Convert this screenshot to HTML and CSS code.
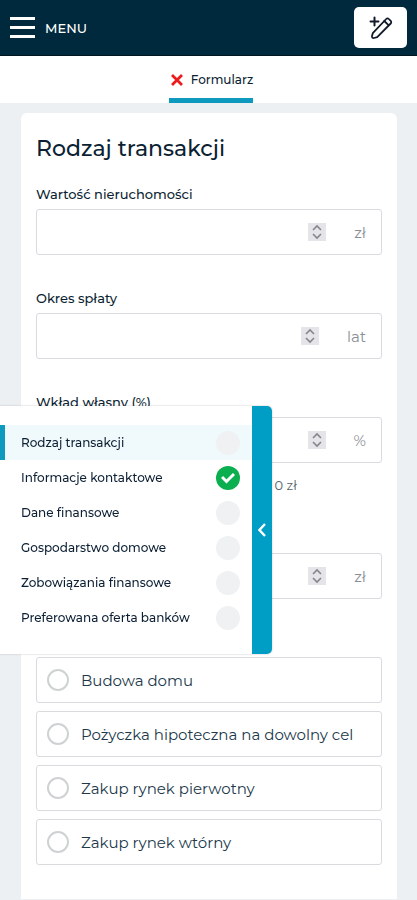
FILE: index.html
```html
<!DOCTYPE html>
<html lang="pl">
<head>
  <meta charset="UTF-8" />
  <meta name="viewport" content="width=device-width, initial-scale=1.0" />
  <title>Formularz</title>
  <link rel="stylesheet" href="styles.css">
</head>
<body>
  <header class="topbar">
    <button type="button" class="menu-button">
      <span class="burger"><i></i><i></i><i></i></span>
      MENU
    </button>
    <button type="button" class="edit-button" aria-label="Nowy wniosek">
      <svg width="24" height="24" viewBox="0 0 24 24" fill="none" stroke="#111a2c" stroke-width="1.8" stroke-linecap="round" stroke-linejoin="round">
        <path d="M5.5 1.5v8M1.5 5.5h8" stroke-width="2" />
        <path d="M3.8 17.2 17.2 3a1.8 1.8 0 0 1 2.6 0l1.9 1.9a1.8 1.8 0 0 1 0 2.6L8.2 21.2 5 22a1.6 1.6 0 0 1-2-2Z" />
        <path d="m15.3 5 4.2 4.2" />
      </svg>
    </button>
  </header>

  <nav class="tabs">
    <a href="#form" class="tab">
      <svg width="12" height="12" viewBox="0 0 12 12" stroke="#ed1c1c" stroke-width="2.8"><path d="m1 1 10 10M11 1 1 11" /></svg>
      Formularz
    </a>
  </nav>

  <main>
    <form class="card" id="form">
      <h1>Rodzaj transakcji</h1>

      <div class="field">
        <label for="value">Wartość nieruchomości</label>
        <div class="input-box">
          <input type="number" id="value">
          <svg class="spinner" viewBox="0 0 18 18"><path d="m5 7 4-4 4 4M5 11l4 4 4-4" /></svg>
          <span class="unit">zł</span>
        </div>
      </div>

      <div class="field">
        <label for="period">Okres spłaty</label>
        <div class="input-box">
          <input type="number" id="period">
          <svg class="spinner" viewBox="0 0 18 18"><path d="m5 7 4-4 4 4M5 11l4 4 4-4" /></svg>
          <span class="unit">lat</span>
        </div>
      </div>

      <div class="field">
        <label for="own">Wkład własny (%)</label>
        <div class="input-box">
          <input type="number" id="own">
          <svg class="spinner" viewBox="0 0 18 18"><path d="m5 7 4-4 4 4M5 11l4 4 4-4" /></svg>
          <span class="unit">%</span>
        </div>
        <p class="note">Wartość wkładu własnego stanowi – 0 zł</p>
      </div>

      <div class="field">
        <label for="amount">Kwota kredytu</label>
        <div class="input-box">
          <input type="number" id="amount">
          <svg class="spinner" viewBox="0 0 18 18"><path d="m5 7 4-4 4 4M5 11l4 4 4-4" /></svg>
          <span class="unit">zł</span>
        </div>
      </div>

      <fieldset class="options">
        <legend>Cel kredytu</legend>
        <label class="option"><input type="radio" name="goal">Budowa domu</label>
        <label class="option"><input type="radio" name="goal">Pożyczka hipoteczna na dowolny cel</label>
        <label class="option"><input type="radio" name="goal">Zakup rynek pierwotny</label>
        <label class="option"><input type="radio" name="goal">Zakup rynek wtórny</label>
      </fieldset>
    </form>
  </main>

  <!-- steps drawer -->
  <aside class="drawer">
    <nav class="steps">
      <a href="#" class="step active">Rodzaj transakcji<span class="dot"></span></a>
      <a href="#" class="step">Informacje kontaktowe
        <span class="dot done"><svg width="14" height="12" viewBox="0 0 14 12" fill="none" stroke="#fff" stroke-width="3"><path d="m1 5 4.5 4.5L13 2" /></svg></span>
      </a>
      <a href="#" class="step">Dane finansowe<span class="dot"></span></a>
      <a href="#" class="step">Gospodarstwo domowe<span class="dot"></span></a>
      <a href="#" class="step">Zobowiązania finansowe<span class="dot"></span></a>
      <a href="#" class="step">Preferowana oferta banków<span class="dot"></span></a>
    </nav>
    <button type="button" class="drawer-handle" aria-label="Zwiń">
      <svg width="8" height="14" viewBox="0 0 8 14" fill="none" stroke="#fff" stroke-width="2.4"><path d="M7 1 1.5 7 7 13" /></svg>
    </button>
  </aside>
</body>
</html>
```

FILE: styles.css
```css
* {
  box-sizing: border-box;
}
body {
  margin: 0;
  font-family: Montserrat, Inter, sans-serif;
  font-size: 13px;
  color: #0c1f33;
  background: #edf0f2;
}
button {
  border: none;
  font: inherit;
  cursor: pointer;
}
a {
  color: inherit;
  text-decoration: none;
}

/* header */
.topbar {
  display: flex;
  justify-content: space-between;
  align-items: center;
  height: 56px;
  padding: 0 10px;
  background: #00293d;
  border-bottom: 1px solid #001522;
}
.menu-button {
  display: flex;
  align-items: center;
  gap: 10px;
  padding: 0;
  background: none;
  color: #fff;
  font-size: 13px;
  font-weight: 500;
}
.burger {
  display: flex;
  flex-direction: column;
  gap: 6px;
  width: 25px;
}
.burger i {
  height: 3px;
  background: #fff;
}
.edit-button {
  display: flex;
  align-items: center;
  justify-content: center;
  width: 53px;
  height: 41px;
  padding: 0;
  background: #fff;
  border-radius: 5px;
}

.tabs {
  display: flex;
  justify-content: center;
  height: 47px;
  padding-left: 5px;
  background: #fff;
}
.tab {
  display: flex;
  align-items: center;
  gap: 8px;
  padding: 5px 0 0 2px;
  border-bottom: 5px solid #0e9abf;
  font-size: 12px;
  font-weight: 500;
}

/* form */
main {
  padding: 10px 20px 0 21px;
}
.card {
  padding: 23px 15px 34px;
  background: #fff;
  border-radius: 6px 6px 0 0;
}
h1 {
  margin: 0 0 22px;
  font-size: 22px;
  line-height: 26px;
  font-weight: 500;
}
.field {
  margin-bottom: 33px;
}
.field label,
.options legend {
  display: block;
  padding: 0;
  margin-bottom: 4px;
  line-height: 21px;
  font-weight: 500;
}
.input-box {
  display: flex;
  align-items: center;
  height: 46px;
  padding: 0 15px;
  border: 1px solid #d9dbde;
  border-radius: 3px;
}
.input-box input {
  flex: 1;
  min-width: 0;
  border: none;
  outline: none;
  background: none;
  font: inherit;
  appearance: textfield;
}
.spinner {
  width: 18px;
  height: 18px;
  margin-right: 28px;
  background: #e5e5e9;
  fill: none;
  stroke: #85868b;
  stroke-width: 1.6;
}
.unit {
  font-size: 15px;
  color: #8a8f95;
}
.note {
  margin: 12px 0 0;
  line-height: 20px;
  color: #555e66;
}
.options {
  display: flex;
  flex-direction: column;
  gap: 8px;
  margin: 0;
  padding: 0;
  border: none;
}
.option {
  display: flex;
  align-items: center;
  gap: 12px;
  height: 46px;
  padding: 0 10px;
  border: 1px solid #d9dbde;
  border-radius: 3px;
  font-size: 15px;
  color: #20384a;
}
.option input {
  appearance: none;
  width: 22px;
  height: 22px;
  margin: 0;
  border: 2px solid #cfd2d3;
  border-radius: 50%;
}
.option input:checked {
  border: 7px solid #009dc4;
}

/* drawer */
.drawer {
  position: fixed;
  left: 0;
  top: 406px;
  display: flex;
  width: 272px;
  background: #fff;
  border-radius: 0 5px 5px 0;
  box-shadow: 0 0 2px rgba(0, 0, 0, 0.25);
}
.steps {
  flex: 1;
  padding: 19px 0;
}
.step {
  display: flex;
  justify-content: space-between;
  align-items: center;
  height: 35px;
  padding: 0 12px 0 16px;
  border-left: 5px solid transparent;
  font-size: 12px;
  font-weight: 500;
}
.step.active {
  border-left-color: #0e9abf;
  background: #f0fafc;
}
.dot {
  display: flex;
  align-items: center;
  justify-content: center;
  width: 24px;
  height: 24px;
  border-radius: 50%;
  background: #eff1f2;
}
.dot.done {
  background: #0caf50;
}
.drawer-handle {
  display: flex;
  align-items: center;
  justify-content: center;
  width: 20px;
  padding: 0;
  background: #009dc4;
  border-radius: 0 5px 5px 0;
}
```
